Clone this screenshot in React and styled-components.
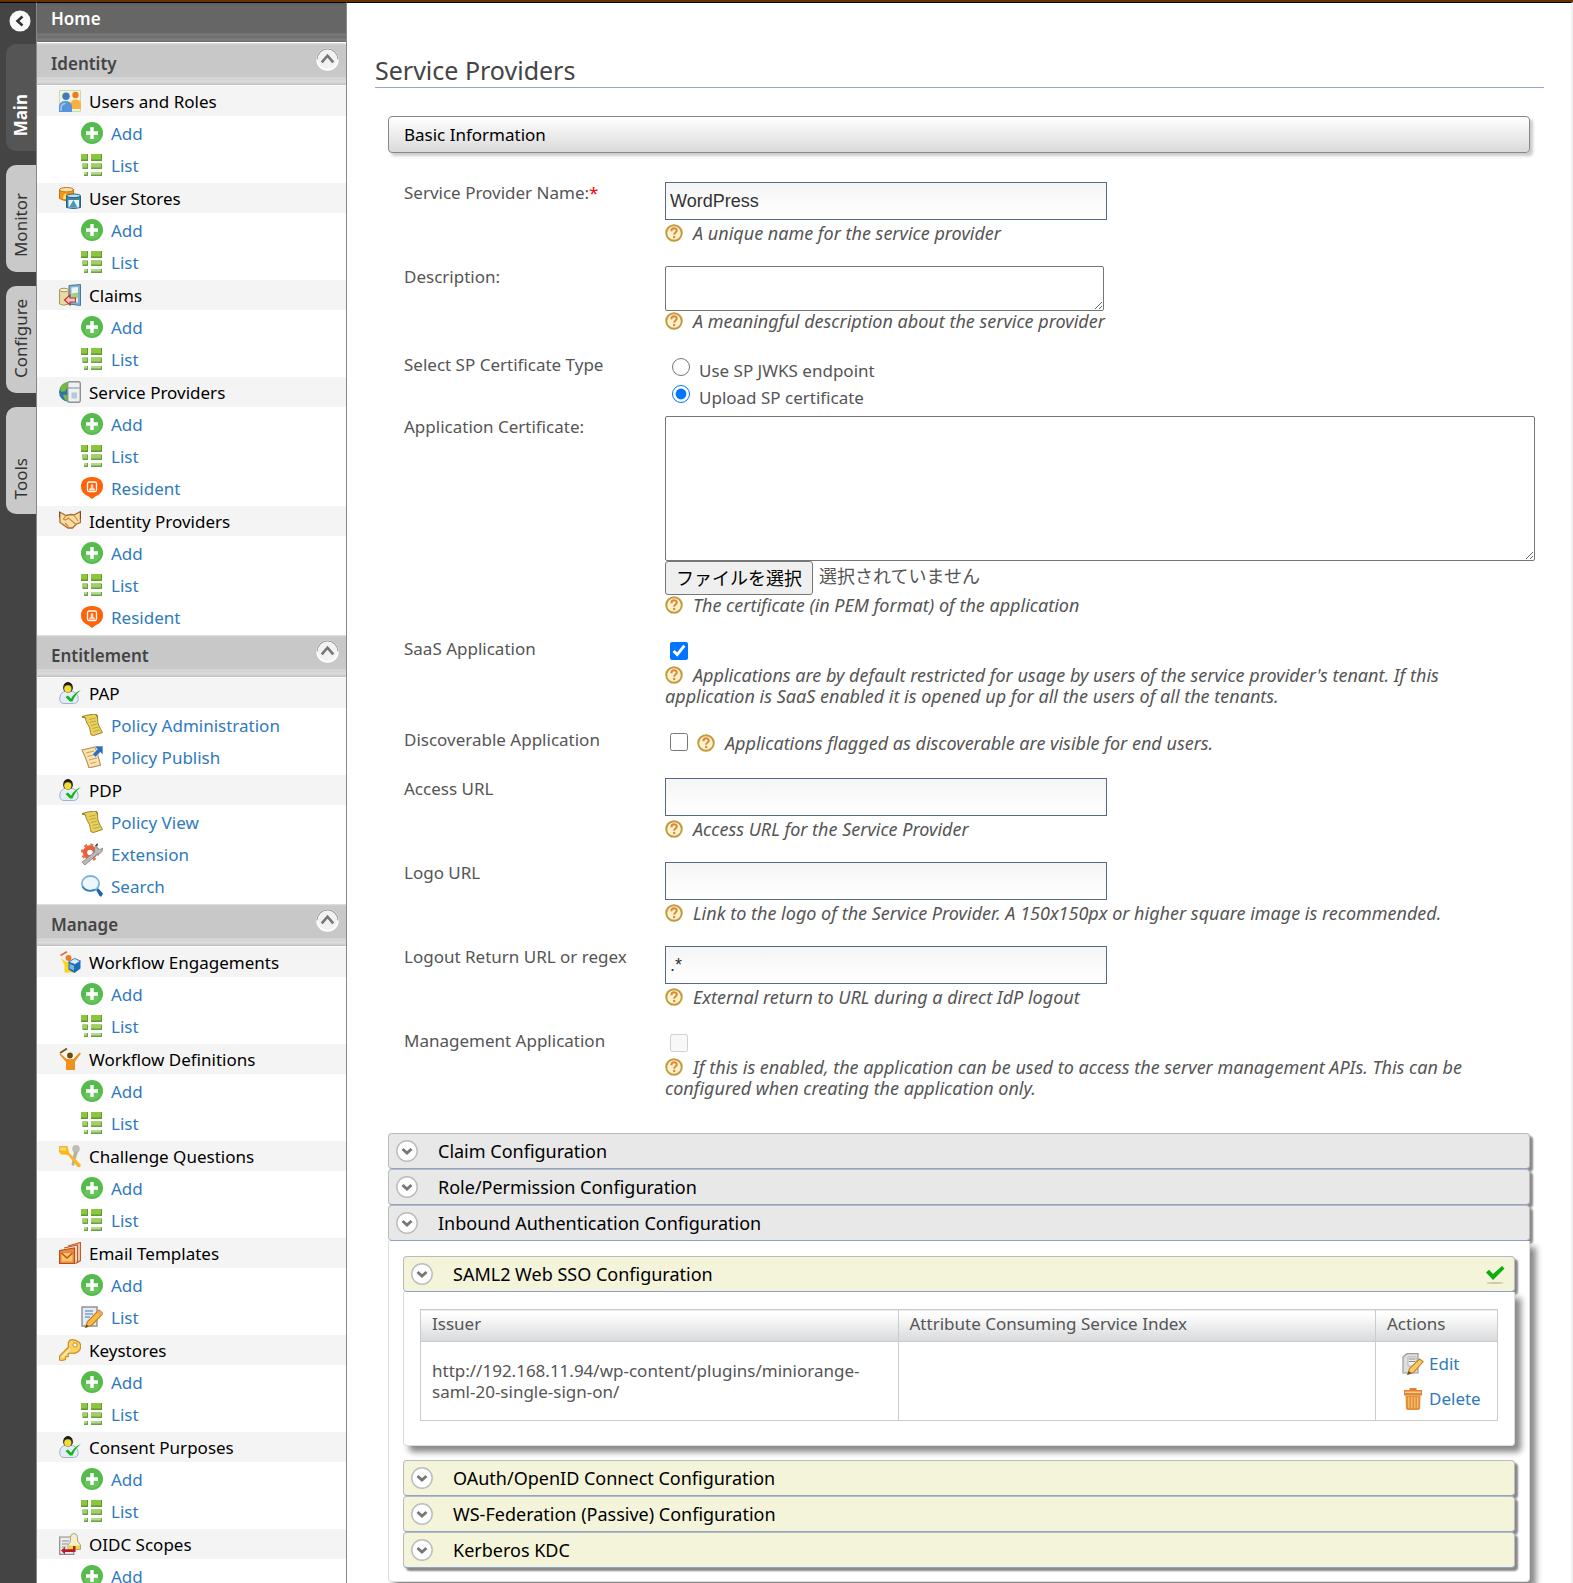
import React, { useRef } from 'react'
import styled, { createGlobalStyle } from 'styled-components'

const GlobalStyle = createGlobalStyle`
    * {
        box-sizing: border-box;
    }
    body {
        margin: 0;
        height: 100vh;
        overflow: hidden;
        background-color: #ffffff;
        color: #555555;
        font-family: "Lucida Grande", "Lucida Sans", "Noto Sans", sans-serif;
        font-size: 17px;
        line-height: 21px;
    }
    a {
        color: #2f7abd;
        text-decoration: none;
    }
    svg {
        display: block;
        flex: none;
    }
`

const Page = styled.div`
    display: flex;
    min-height: 100vh;
    border-top: 2px solid #663300;
`

/* ---------- left rail ---------- */

const Rail = styled.div`
    flex: none;
    width: 36px;
    padding: 7px 0 0 6px;
    background-color: #444444;
    border-top: 1px solid #000000;
`
const BackButton = styled.button`
    display: block;
    margin: 0 0 12px 3px;
    padding: 0;
    border: 0;
    background: none;
    cursor: pointer;
`
const RailTabs = styled.nav`
    display: flex;
    flex-direction: column;
    gap: 14px;
`
const RailTab = styled.a`
    display: flex;
    align-items: flex-end;
    justify-content: center;
    height: 107px;
    padding: 0 2px 15px 0;
    border-radius: 10px 0 0 10px;
    background-color: ${props => props.$active ? "#555555" : "#c9c9c9"};
    color: ${props => props.$active ? "#ffffff" : "#333333"};
    font-weight: ${props => props.$active ? "bold" : "normal"};
`
const RailText = styled.span`
    writing-mode: vertical-rl;
    transform: rotate(180deg);
`

/* ---------- menu ---------- */

const Menu = styled.aside`
    flex: none;
    width: 311px;
    border-top: 1px solid #000000;
    border-left: 1px solid #888888;
    border-right: 1px solid #888888;
`
const HomeBar = styled.div`
    height: 40px;
    padding: 5px 14px;
    background: linear-gradient(#5c5c5c 0, #666666 2px, #666666 30px, #7c7c7c 31px, #6c6c6c 34px, #808080 37px, #666666 39px, #ffffff 39px);
    font-weight: 600;
    a {
        color: #ffffff;
    }
`
const SectionBar = styled.div`
    display: flex;
    justify-content: space-between;
    height: 43px;
    padding: 5px 7px 0 14px;
    background: linear-gradient(#e4e4e4 0, #c8c8c8 2px, #c8c8c8 34px, #dcdcdc 35px, #cfcfcf 37px, #e0e0e0 38px, #cccccc 41px, #b4b4b4 42px, #ffffff 42px);
    color: #444444;
    font-weight: 600;
    line-height: 32px;
`
const ToggleButton = styled.button`
    align-self: flex-start;
    padding: 0;
    border: 0;
    background: none;
    cursor: pointer;
`
const Group = styled.div`
    padding-bottom: 2px;
`
const GroupTitle = styled.div`
    display: flex;
    align-items: center;
    gap: 8px;
    height: 30px;
    margin-bottom: 1px;
    padding-left: 22px;
    background-color: #f4f4f4;
    color: #000000;
`
const MenuLink = styled.a`
    display: flex;
    align-items: center;
    gap: 8px;
    height: 32px;
    padding-left: 44px;
`

/* ---------- content ---------- */

const Content = styled.main`
    flex: 1;
    min-width: 0;
    padding: 52px 27px 0 28px;
    border-top: 1px solid #000000;
    border-right: 2px solid #f0f0f0;
`
const PageTitle = styled.h2`
    margin: 0 0 28px;
    padding-bottom: 2px;
    border-bottom: 1px solid #93a5cd;
    color: #444444;
    font-size: 25px;
    font-weight: normal;
    line-height: 30px;
`
const WorkArea = styled.div`
    padding: 0 14px 0 13px;
`
const SectionTitle = styled.div`
    height: 37px;
    margin-bottom: 29px;
    padding: 7px 15px;
    border: 1px solid #888888;
    border-radius: 4px;
    background: linear-gradient(#ffffff, #dadada);
    box-shadow: 3px 3px 3px #cccccc;
    color: #000000;
`
const Form = styled.form`
    padding-left: 16px;
    margin-bottom: 34px;
`
const Row = styled.div`
    display: grid;
    grid-template-columns: 261px minmax(0, 1fr);
    margin-bottom: ${props => props.$tight ? "8px" : "22px"};
`
const Required = styled.span`
    color: #ff0000;
`
const TextInput = styled.input`
    display: block;
    width: 442px;
    max-width: 100%;
    height: 38px;
    margin-bottom: 3px;
    padding: 0 4px;
    border: 1px solid #566a86;
    background: linear-gradient(#f5f5f5, #ffffff);
    color: #333333;
    font-family: "Liberation Sans", Arial, sans-serif;
    font-size: 18px;
`
const TextArea = styled.textarea`
    display: block;
    width: ${props => props.$wide ? "calc(100% + 5px)" : "439px"};
    height: ${props => props.$wide ? "145px" : "45px"};
    border: 1px solid #767676;
    border-radius: 2px;
`
const Hint = styled.div`
    padding-right: 40px;
    font-size: 18px;
    font-style: italic;
    svg {
        display: inline-block;
        vertical-align: -2px;
        margin-right: 10px;
    }
`
const RadioRow = styled.div`
    display: flex;
    gap: 9px;
    height: 27px;
    padding: 4px 0 0 7px;
    label {
        padding-top: 2px;
    }
`
const Tick = styled.input`
    flex: none;
    width: 18px;
    height: 18px;
    margin: 0;
    accent-color: #0075ff;
`
const TickRow = styled.div`
    display: flex;
    gap: 9px;
    height: 27px;
    padding: 4px 0 0 5px;
`
const FileRow = styled.div`
    display: flex;
    align-items: flex-start;
    gap: 6px;
    height: 34px;
    font-family: "Noto Sans CJK JP", sans-serif;
    font-size: 18px;
    line-height: 28px;
    input {
        display: none;
    }
`
const FileButton = styled.button`
    height: 34px;
    padding: 0 10px 2px;
    border: 1px solid #767676;
    border-radius: 3px;
    background-color: #efefef;
    color: #000000;
    font: inherit;
`

/* ---------- accordions ---------- */

const Bar = styled.button`
    display: flex;
    align-items: center;
    gap: 20px;
    width: 100%;
    height: 36px;
    padding: 0 8px 0 7px;
    border: 1px solid #bbbbbb;
    border-bottom-color: #8fa3cb;
    border-radius: 4px;
    background-color: ${props => props.$inner ? "#f4f4da" : "#e8e8e8"};
    box-shadow: 3px 3px 2px #888888;
    color: #000000;
    font: inherit;
    font-size: 18px;
    text-align: left;
    cursor: pointer;
`
const BarText = styled.span`
    flex: 1;
`
const Panel = styled.div`
    position: relative;
    padding: ${props => props.$inner ? "17px 16px 24px" : "15px 14px 13px"};
    margin-bottom: ${props => props.$inner ? "14px" : "0"};
    border: 1px solid #dddddd;
    border-top: 0;
    border-radius: 0 0 4px 4px;
    background-color: #ffffff;
    box-shadow: 6px 6px 6px #888888;
`
const IssuerTable = styled.table`
    width: 100%;
    border-collapse: collapse;
    table-layout: fixed;
    th, td {
        border: 1px solid #cccccc;
        padding: 0 11px;
        text-align: left;
    }
    th {
        height: 32px;
        padding-bottom: 4px;
        background: linear-gradient(#ffffff 10%, #d8d9db);
        font-weight: normal;
    }
    th:last-child {
        width: 122px;
    }
    td {
        height: 79px;
        overflow-wrap: anywhere;
    }
    td:last-child {
        padding: 0 0 0 26px;
    }
`
const ActionLink = styled.a`
    display: flex;
    align-items: center;
    gap: 5px;
    height: 35px;
`

/* ---------- icons ---------- */

const Icon = ({ size = 22, children }) => (
    <svg width={size} height={size} viewBox="0 0 22 22" aria-hidden="true">{children}</svg>
)

const BackIcon = () => (
    <Icon>
        <circle cx="11" cy="11" r="10.5" fill="#fafafa" />
        <path d="M13.5 6.5 8.5 11l5 4.5" fill="none" stroke="#333" strokeWidth="2.6" />
    </Icon>
)
const UpIcon = () => (
    <Icon size={23}>
        <circle cx="11" cy="11" r="10" fill="#f2f2f2" stroke="#fff" strokeWidth="1.6" />
        <path d="M1 11a10 10 0 0 1 20 0" fill="none" stroke="#999" />
        <path d="M5.500 13.800 11 7.400l5.500 6.400" fill="none" stroke="#777" strokeWidth="2.6" />
    </Icon>
)
const DownIcon = () => (
    <Icon>
        <circle cx="11" cy="11" r="10.2" fill="#fff" stroke="#bdbdbd" strokeWidth="1.5" />
        <path d="M6.5 9 11 13l4.500-4" fill="none" stroke="#777" strokeWidth="2.9" />
    </Icon>
)
const HelpIcon = () => (
    <Icon size={18}>
        <circle cx="11" cy="11" r="9.5" fill="#fbf3cc" stroke="#c49a3c" strokeWidth="2.4" />
        <path d="M7.800 9c0-5 6.600-4.600 6.600-1 0 2.400-3.200 2.400-3.200 5" fill="none" stroke="#e0853a" strokeWidth="2.4" />
        <circle cx="11.200" cy="16" r="1.500" fill="#e0853a" />
    </Icon>
)
const AddIcon = () => (
    <Icon>
        <circle cx="11" cy="11" r="11" fill="#55bb4c" />
        <path d="M3 15a9 9 0 0 0 16 0c-2-4-5-5-8-5s-6 1-8 5z" fill="#7ccf6c" opacity=".5" />
        <path d="M9.300 5h3.400v4.300H17v3.400h-4.300V17H9.300v-4.300H5V9.300h4.300z" fill="#fff" />
    </Icon>
)
const ListIcon = () => (
    <Icon>
        <path d="M0 0h7v7H0zM10 0h11v7H10z" fill="#5f9a2e" />
        <path d="M0 0h6v5.500H0zM10 0h10v5.500H10z" fill="#8cc63f" />
        <path d="M1.500 9.500H7V15H1.500zM10 9.500h11V15H10z" fill="#6b9f48" />
        <path d="M1.500 9.500H6v4H1.500zM10 9.500h10v4H10z" fill="#a0cf62" />
        <path d="M3 18h4v4H3zM10 18h11v4H10z" fill="#6b9f48" />
        <path d="M3 18h3v2.500H3zM10 18h10v2.500H10z" fill="#b4d98c" />
    </Icon>
)
const ResidentIcon = () => (
    <Icon>
        <path d="M5 1.200Q11-1 17 1.200 22 3.500 22 9q0 5.500-4 8.500-4 1.500-7 4.500-3-3-7-4.500Q0 14.500 0 9q0-5.500 5-7.800z" fill="#ff6208" />
        <rect x="6.500" y="5" width="9" height="9.500" rx="1.500" fill="none" stroke="#fff" strokeWidth="1.3" />
        <path d="M8 13.500c0-2 1-2.500 2-3-.8-1.500-.3-3.500 1-3.500s1.800 2 1 3.500c1 .5 2 1 2 3z" fill="#ffd9c2" />
    </Icon>
)
const UsersIcon = () => (
    <Icon>
        <path d="M.5.500h21v21H.500z" fill="#eef5dd" stroke="#c3dfae" />
        <circle cx="16.500" cy="5" r="3.200" fill="#f57a1c" />
        <path d="M11.500 19v-5q.500-4.500 5-4.500T22 13v6z" fill="#fbb040" />
        <circle cx="7" cy="6.200" r="3.700" fill="#3f78c4" />
        <path d="M0 22v-6q1-5 6.500-5t6.500 5v6z" fill="#5a94d8" />
        <path d="M2 21v-4q1-3.500 4.500-3.500" fill="none" stroke="#a7caee" strokeWidth="1.5" />
    </Icon>
)
const UserStoresIcon = () => (
    <Icon>
        <path d="M.500 2.500v9q4 2.500 9 2l5-2v-9z" fill="#f7941e" stroke="#c96f10" />
        <ellipse cx="7.500" cy="2.700" rx="7" ry="2.200" fill="#fde3a7" stroke="#c96f10" />
        <path d="M4 12q0-4 2.500-6 1 2 .5 6z" fill="#ffe36b" />
        <path d="M7.500 9v11.500q7 2 14 0V9z" fill="#3d86a6" stroke="#28607c" />
        <ellipse cx="14.500" cy="8.800" rx="7" ry="1.800" fill="#bfe0ec" stroke="#28607c" />
        <path d="M9.500 13h10.500v7.500H9.500z" fill="#eaf5fa" />
        <path d="M10 20.500 14.500 13l4 7.500z" fill="#4a98b8" />
    </Icon>
)
const ClaimsIcon = () => (
    <Icon>
        <path d="M10 1.500 21.500.500v21L10 20z" fill="#7fb2cf" stroke="#44799a" />
        <path d="M12.500 3.500 19 3v15.500l-6.500-.5z" fill="#eef3f5" />
        <path d="M12.500 9.500 19 8.500V14h-6.500z" fill="#a6cf7a" />
        <path d="M.500 6v14q4 2.500 9 0V6z" fill="#ead9a4" stroke="#a9945c" />
        <ellipse cx="5" cy="6" rx="4.500" ry="1.800" fill="#f8f0d2" stroke="#a9945c" />
        <path d="M5.500 16 11 11v3h5.500v4H11v3z" fill="#f5c6c0" stroke="#b8383d" strokeWidth="1.2" />
    </Icon>
)
const ProvidersIcon = () => (
    <Icon>
        <circle cx="10" cy="11" r="10" fill="#2f74ad" />
        <path d="M2 5Q5 1 9.500 1v6Q7 7 6.500 10L3 11Q0 9 2 5zM4 14q3-1 4.500 1v5.500Q5 19 4 14z" fill="#74bb3c" />
        <rect x="8.700" y=".7" width="12.600" height="20.600" rx="2" fill="#eef0f2" stroke="#8d9095" strokeWidth="1.4" />
        <path d="M9 7h12" stroke="#a2a5a9" strokeWidth="1.4" />
        <path d="M12.500 11.500h5.500v6h-5.500z" fill="#b7c8da" />
    </Icon>
)
const HandshakeIcon = () => (
    <Icon>
        <path d="M.500 2 7 5.500l5-1 3 .5 6.500-3.500v11l-4 1.500-4 4H9L1 12.500z" fill="#fbdca4" stroke="#a8702c" strokeWidth="1.3" />
        <path d="M7 5.500 4.500 9q2 2 5-1l7.500 6.500M6 13l3.500 3.500M15 5l4 6" fill="none" stroke="#c98b3e" strokeWidth="1.1" />
        <path d="M.500 2v5M21.500 1.500V9" stroke="#7c4a18" strokeWidth="1.2" />
    </Icon>
)
const UserCheckIcon = () => (
    <Icon>
        <path d="M.700 16q0-4 4-6.500h9q5.500 2 5.500 7t-5 5H5q-4.300 0-4.300-5.500z" fill="#e3ecf7" stroke="#9fb2cd" />
        <circle cx="9" cy="5.800" r="5" fill="#3a3526" />
        <circle cx="8.800" cy="6.800" r="3.600" fill="#f0dc35" />
        <path d="M4.500 3.500Q6 0 9 0t4.500 3.500Q9 2 4.500 3.500z" fill="#1f1c18" />
        <path d="M6.500 15 9 13.500l3 3.200Q15.500 10.500 22 8q-6 4.500-8.500 11.500H11z" fill="#13b51d" />
    </Icon>
)
const ScrollIcon = () => (
    <Icon>
        <path d="M1 3q2-1.500 6-2l7-1q3 .5 2.500 4-.5 5 2.500 10l2.500 4.500-9 3q-3 .5-3-3Q9.500 14 6 9 4.500 6 4.500 4z" fill="#e8d05a" stroke="#9c862e" />
        <path d="M8 5.500 14.500 4M8.500 8.500l6.500-1.500M10 11.500l6-1.500M11.500 14.500l6-1.500M12.500 17.500l6-1.500" stroke="#b9a140" strokeWidth=".9" />
        <path d="M14 0q3 .5 2.500 4M1 3q2-1 3.500 1" fill="none" stroke="#8a7420" />
    </Icon>
)
const PublishIcon = () => (
    <Icon>
        <path d="m1 4 13-3 2 5 3.500 13L8 22Q5.500 13 1 4z" fill="#fbe3b0" stroke="#b39055" strokeWidth="1.1" />
        <path d="m5 7 8-2M6.500 10.500l8-2M8 14l8-2M9.500 17.500l6-1.500" stroke="#cf9f5a" strokeWidth="1.2" />
        <path d="M13.500 0H22v9l-2.700-2.800-4.800 5-3-3 4.800-5z" fill="#2e6fbc" stroke="#fff" strokeWidth=".6" />
    </Icon>
)
const ExtensionIcon = () => (
    <Icon>
        <circle cx="9" cy="9.500" r="5" fill="none" stroke="#e8603c" strokeWidth="4.4" />
        <circle cx="9" cy="9.500" r="8" fill="none" stroke="#e8704e" strokeWidth="2.2" strokeDasharray="3.1 3.18" />
        <path d="m1 19 12.500-10q-1-4.500 2-7.500l.5 3.500 3 1.500 3-1.500q-.5 5.500-5.500 6L4 22z" fill="#b8b8b8" stroke="#808080" strokeWidth=".8" />
        <path d="M14 3q1-2 3-3l-.500 3z" fill="#444" />
    </Icon>
)
const SearchIcon = () => (
    <Icon>
        <path d="m14.500 14 2-1.500 5.500 6-1.500 3q-1.500 0-2-.500z" fill="#1f66ab" />
        <ellipse cx="9.500" cy="8.500" rx="8.600" ry="7.500" fill="#eff7fd" stroke="#7db4e0" strokeWidth="1.8" />
        <path d="M1.500 11.500q4 6.500 13 3" fill="none" stroke="#2f7fc4" strokeWidth="1.6" />
    </Icon>
)
const EngageIcon = () => (
    <Icon>
        <path d="M1.500 4.500 8 .700" stroke="#e8693c" strokeWidth="1.8" />
        <path d="m2 7 5.500 4H14v10.500H5.500V14z" fill="#ffd21f" />
        <circle cx="9.500" cy="7" r="3" fill="#ee7d22" />
        <path d="m15.500 7.500 6 2.500v7.500L15.500 22 9.500 18.500V11z" fill="#1c6db5" />
        <path d="m15.500 7.500 6 2.500-5.500 3.500L9.500 11z" fill="#dcecf8" stroke="#1c6db5" strokeWidth=".8" />
        <path d="m10.500 12.800 4.500 2v4.700L10.500 17.500z" fill="#79b4e2" />
    </Icon>
)
const DefinitionIcon = () => (
    <Icon>
        <path d="M1 5 8 .500" stroke="#7a5a1c" strokeWidth="1.9" />
        <path d="m.500 6.500 1-1L7.500 11h7l6-6.500 1.500 1L16 13.500V22H7v-8z" fill="#f0901e" />
        <circle cx="11" cy="7.700" r="3.500" fill="#fff" />
        <circle cx="11" cy="7.500" r="2.900" fill="#6b4d08" />
    </Icon>
)
const ChallengeIcon = () => (
    <Icon>
        <circle cx="17" cy="3.800" r="3.800" fill="#bdbdb8" />
        <path d="m15 6 4 1-2.500 7.500-1.500 6.500-2.500-1z" fill="#b1b1aa" />
        <path d="M0 1h8.500L10 7.500 22 20l-1 2h-2.500L9 10 2 9.500 0 7z" fill="#f9b71e" />
        <path d="M1 2.500h6v3H1z" fill="#ffdb6b" />
    </Icon>
)
const EmailIcon = () => (
    <Icon>
        <path d="M9 4 21.500.500v18l-5 3" fill="#f6d0b6" stroke="#c25a22" strokeWidth="1.2" />
        <path d="M5 6 18.500 3v17" fill="#fbe6d6" stroke="#c25a22" strokeWidth="1.2" />
        <path d="M.600 8.500 15.500 6v15.500H.600z" fill="#ec8a3c" stroke="#b84e1c" strokeWidth="1.2" />
        <path d="M2.500 11h11v8.500h-11z" fill="#fbc36a" />
        <path d="m2.500 11 5.500 5 5.500-5" fill="none" stroke="#b84e1c" strokeWidth="1.3" />
    </Icon>
)
const EditIcon = () => (
    <Icon>
        <path d="M1 1h15v19H1z" fill="#e8ebee" stroke="#8e9296" strokeWidth="1.4" />
        <path d="M4 5h8M4 8h8M4 11h5" stroke="#6fa4d4" strokeWidth="1.3" />
        <path d="m18 4 4 3.500-11 11.500-6.500 2.500 2-6z" fill="#f7bd3d" stroke="#c8762a" strokeWidth="1.1" />
        <path d="m4.500 21.500 1-3 2 1.800z" fill="#4a3a28" />
        <path d="m16 6 4 3.500L22 7.500 18 4z" fill="#f3a06b" />
    </Icon>
)
const KeyIcon = () => (
    <Icon>
        <path d="M11 1q4-1.500 9.500 2.500 3 5-1 9-3.500 2.500-7.500 1.500l-3 1 .5 2.500-3 .5v2.500L3 21.500l-2.500-.500v-4L9.500 8q-1-4.500 1.500-7z" fill="#fbd063" stroke="#c98f28" strokeWidth="1.2" />
        <path d="M3 18.500 11 10" stroke="#fff0bd" strokeWidth="1.3" />
        <circle cx="16" cy="6" r="2.100" fill="#fff" stroke="#c98f28" />
    </Icon>
)
const ScopesIcon = () => (
    <Icon>
        <path d="M.700 4h14v17.300H.700z" fill="#ececec" stroke="#8c8c8c" strokeWidth="1.2" />
        <path d="M3 8h7M3 11h6M3 14h4" stroke="#8d8d8d" />
        <path d="M11.500 4.500q0-4 3.500-4t3.500 4V8l3 4v4.500H9V12l2.500-3.500z" fill="#f4f0c9" stroke="#a9a58c" />
        <path d="M10 12q5 2 11 0v3.500q-5 2-11 0z" fill="#f0d53a" />
        <path d="m2 17.500 4-3.500v2.200h8V13h2.500v6H6v2.500z" fill="#b81c22" />
    </Icon>
)
const RowEditIcon = () => (
    <Icon>
        <path d="M1 4 5 .700h11V20H1z" fill="#dedede" stroke="#9b9b9b" strokeWidth="1.2" />
        <path d="M6 4h8v9H6z" fill="#f3f3f3" stroke="#b5b5b5" />
        <path d="M7 6h6M7 8.500h6" stroke="#888" />
        <path d="m17.500 6 3.700 2.500-9.700 11-6 2 2-6z" fill="#f8cb5a" stroke="#c0803a" strokeWidth="1.1" />
        <path d="m5.500 21.500 1.200-3.500 3 2.300z" fill="#6b4a20" />
    </Icon>
)
const TrashIcon = () => (
    <Icon>
        <path d="M7.500 0h7v2h5.500v5.500h-18V2h5.500z" fill="#e2812c" />
        <path d="M3.500 7.500h15L18 21l-1.500 1h-11L4 21z" fill="#e2913a" />
        <path d="M6.800 9v11M9.800 9v11M12.800 9v11M15.600 9v11" stroke="#f6c374" strokeWidth="1.2" />
        <path d="M3 4.300h16" stroke="#fbcf9a" strokeWidth="1.6" />
    </Icon>
)
const CheckIcon = () => (
    <Icon>
        <ellipse cx="11" cy="20" rx="8.500" ry="1" fill="#cfc6a6" />
        <path d="m2 9.500 3-2.800 4 4.300L18 3l2.500 2.500L9 17z" fill="#0cae10" />
    </Icon>
)

/* ---------- data ---------- */

const add = { label: "Add", icon: AddIcon }
const list = { label: "List", icon: ListIcon }
const resident = { label: "Resident", icon: ResidentIcon }

const sections = [
    {
        title: "Identity",
        groups: [
            { title: "Users and Roles", icon: UsersIcon, links: [add, list] },
            { title: "User Stores", icon: UserStoresIcon, links: [add, list] },
            { title: "Claims", icon: ClaimsIcon, links: [add, list] },
            { title: "Service Providers", icon: ProvidersIcon, links: [add, list, resident] },
            { title: "Identity Providers", icon: HandshakeIcon, links: [add, list, resident] },
        ],
    },
    {
        title: "Entitlement",
        groups: [
            {
                title: "PAP", icon: UserCheckIcon, links: [
                    { label: "Policy Administration", icon: ScrollIcon },
                    { label: "Policy Publish", icon: PublishIcon },
                ]
            },
            {
                title: "PDP", icon: UserCheckIcon, links: [
                    { label: "Policy View", icon: ScrollIcon },
                    { label: "Extension", icon: ExtensionIcon },
                    { label: "Search", icon: SearchIcon },
                ]
            },
        ],
    },
    {
        title: "Manage",
        groups: [
            { title: "Workflow Engagements", icon: EngageIcon, links: [add, list] },
            { title: "Workflow Definitions", icon: DefinitionIcon, links: [add, list] },
            { title: "Challenge Questions", icon: ChallengeIcon, links: [add, list] },
            { title: "Email Templates", icon: EmailIcon, links: [add, { label: "List", icon: EditIcon }] },
            { title: "Keystores", icon: KeyIcon, links: [add, list] },
            { title: "Consent Purposes", icon: UserCheckIcon, links: [add, list] },
            { title: "OIDC Scopes", icon: ScopesIcon, links: [add] },
        ],
    },
]

const Help = ({ children }) => <Hint><HelpIcon />{children}</Hint>

const TextRow = ({ id, label, required, value, hint }) => (
    <Row>
        <label htmlFor={id}>{label}{required && <Required>*</Required>}</label>
        <div>
            <TextInput id={id} type="text" defaultValue={value} />
            <Help>{hint}</Help>
        </div>
    </Row>
)

const AccordionBar = ({ inner, done, children }) => (
    <Bar type="button" $inner={inner}>
        <DownIcon />
        <BarText>{children}</BarText>
        {done && <CheckIcon />}
    </Bar>
)

const SideMenu = () => (
    <Menu>
        <HomeBar><a href="#home">Home</a></HomeBar>
        {sections.map((section) => (
            <div key={section.title}>
                <SectionBar>
                    {section.title}
                    <ToggleButton type="button" aria-label={section.title}><UpIcon /></ToggleButton>
                </SectionBar>
                {section.groups.map((group) => (
                    <Group key={group.title}>
                        <GroupTitle><group.icon />{group.title}</GroupTitle>
                        {group.links.map((link) => (
                            <MenuLink href="#menu" key={link.label}><link.icon />{link.label}</MenuLink>
                        ))}
                    </Group>
                ))}
            </div>
        ))}
    </Menu>
)

const App = () => {
    const file = useRef(null)

    return (
        <Page>
            <GlobalStyle />
            <Rail>
                <BackButton type="button" aria-label="Collapse"><BackIcon /></BackButton>
                <RailTabs>
                    <RailTab href="#main" $active><RailText>Main</RailText></RailTab>
                    <RailTab href="#monitor"><RailText>Monitor</RailText></RailTab>
                    <RailTab href="#configure"><RailText>Configure</RailText></RailTab>
                    <RailTab href="#tools"><RailText>Tools</RailText></RailTab>
                </RailTabs>
            </Rail>
            <SideMenu />
            <Content>
                <PageTitle>Service Providers</PageTitle>
                <WorkArea>
                    <SectionTitle>Basic Information</SectionTitle>
                    <Form>
                        <TextRow id="spName" label="Service Provider Name:" required value="WordPress" hint="A unique name for the service provider" />
                        <Row>
                            <label htmlFor="description">Description:</label>
                            <div>
                                <TextArea id="description" />
                                <Help>A meaningful description about the service provider</Help>
                            </div>
                        </Row>
                        <Row $tight>
                            <span>Select SP Certificate Type</span>
                            <div>
                                <RadioRow>
                                    <Tick type="radio" name="certType" id="jwks" />
                                    <label htmlFor="jwks">Use SP JWKS endpoint</label>
                                </RadioRow>
                                <RadioRow>
                                    <Tick type="radio" name="certType" id="upload" defaultChecked />
                                    <label htmlFor="upload">Upload SP certificate</label>
                                </RadioRow>
                            </div>
                        </Row>
                        <Row>
                            <label htmlFor="certificate">Application Certificate:</label>
                            <div>
                                <TextArea id="certificate" $wide />
                                <FileRow>
                                    <FileButton type="button" onClick={() => file.current.click()}>ファイルを選択</FileButton>
                                    <span>選択されていません</span>
                                    <input type="file" ref={file} />
                                </FileRow>
                                <Help>The certificate (in PEM format) of the application</Help>
                            </div>
                        </Row>
                        <Row>
                            <label htmlFor="saas">SaaS Application</label>
                            <div>
                                <TickRow><Tick type="checkbox" id="saas" defaultChecked /></TickRow>
                                <Help>Applications are by default restricted for usage by users of the service provider's tenant. If this application is SaaS enabled it is opened up for all the users of all the tenants.</Help>
                            </div>
                        </Row>
                        <Row>
                            <label htmlFor="discoverable">Discoverable Application</label>
                            <TickRow>
                                <Tick type="checkbox" id="discoverable" />
                                <Help>Applications flagged as discoverable are visible for end users.</Help>
                            </TickRow>
                        </Row>
                        <TextRow id="accessUrl" label="Access URL" hint="Access URL for the Service Provider" />
                        <TextRow id="logoUrl" label="Logo URL" hint="Link to the logo of the Service Provider. A 150x150px or higher square image is recommended." />
                        <TextRow id="logoutUrl" label="Logout Return URL or regex" value=".*" hint="External return to URL during a direct IdP logout" />
                        <Row>
                            <label htmlFor="management">Management Application</label>
                            <div>
                                <TickRow><Tick type="checkbox" id="management" disabled /></TickRow>
                                <Help>If this is enabled, the application can be used to access the server management APIs. This can be configured when creating the application only.</Help>
                            </div>
                        </Row>
                    </Form>

                    <AccordionBar>Claim Configuration</AccordionBar>
                    <AccordionBar>Role/Permission Configuration</AccordionBar>
                    <AccordionBar>Inbound Authentication Configuration</AccordionBar>
                    <Panel>
                        <AccordionBar inner done>SAML2 Web SSO Configuration</AccordionBar>
                        <Panel $inner>
                            <IssuerTable>
                                <thead>
                                    <tr>
                                        <th>Issuer</th>
                                        <th>Attribute Consuming Service Index</th>
                                        <th>Actions</th>
                                    </tr>
                                </thead>
                                <tbody>
                                    <tr>
                                        <td>http://192.168.11.94/wp-content/plugins/miniorange-saml-20-single-sign-on/</td>
                                        <td></td>
                                        <td>
                                            <ActionLink href="#edit"><RowEditIcon />Edit</ActionLink>
                                            <ActionLink href="#delete"><TrashIcon />Delete</ActionLink>
                                        </td>
                                    </tr>
                                </tbody>
                            </IssuerTable>
                        </Panel>
                        <AccordionBar inner>OAuth/OpenID Connect Configuration</AccordionBar>
                        <AccordionBar inner>WS-Federation (Passive) Configuration</AccordionBar>
                        <AccordionBar inner>Kerberos KDC</AccordionBar>
                    </Panel>
                </WorkArea>
            </Content>
        </Page>
    )
}

export default App
